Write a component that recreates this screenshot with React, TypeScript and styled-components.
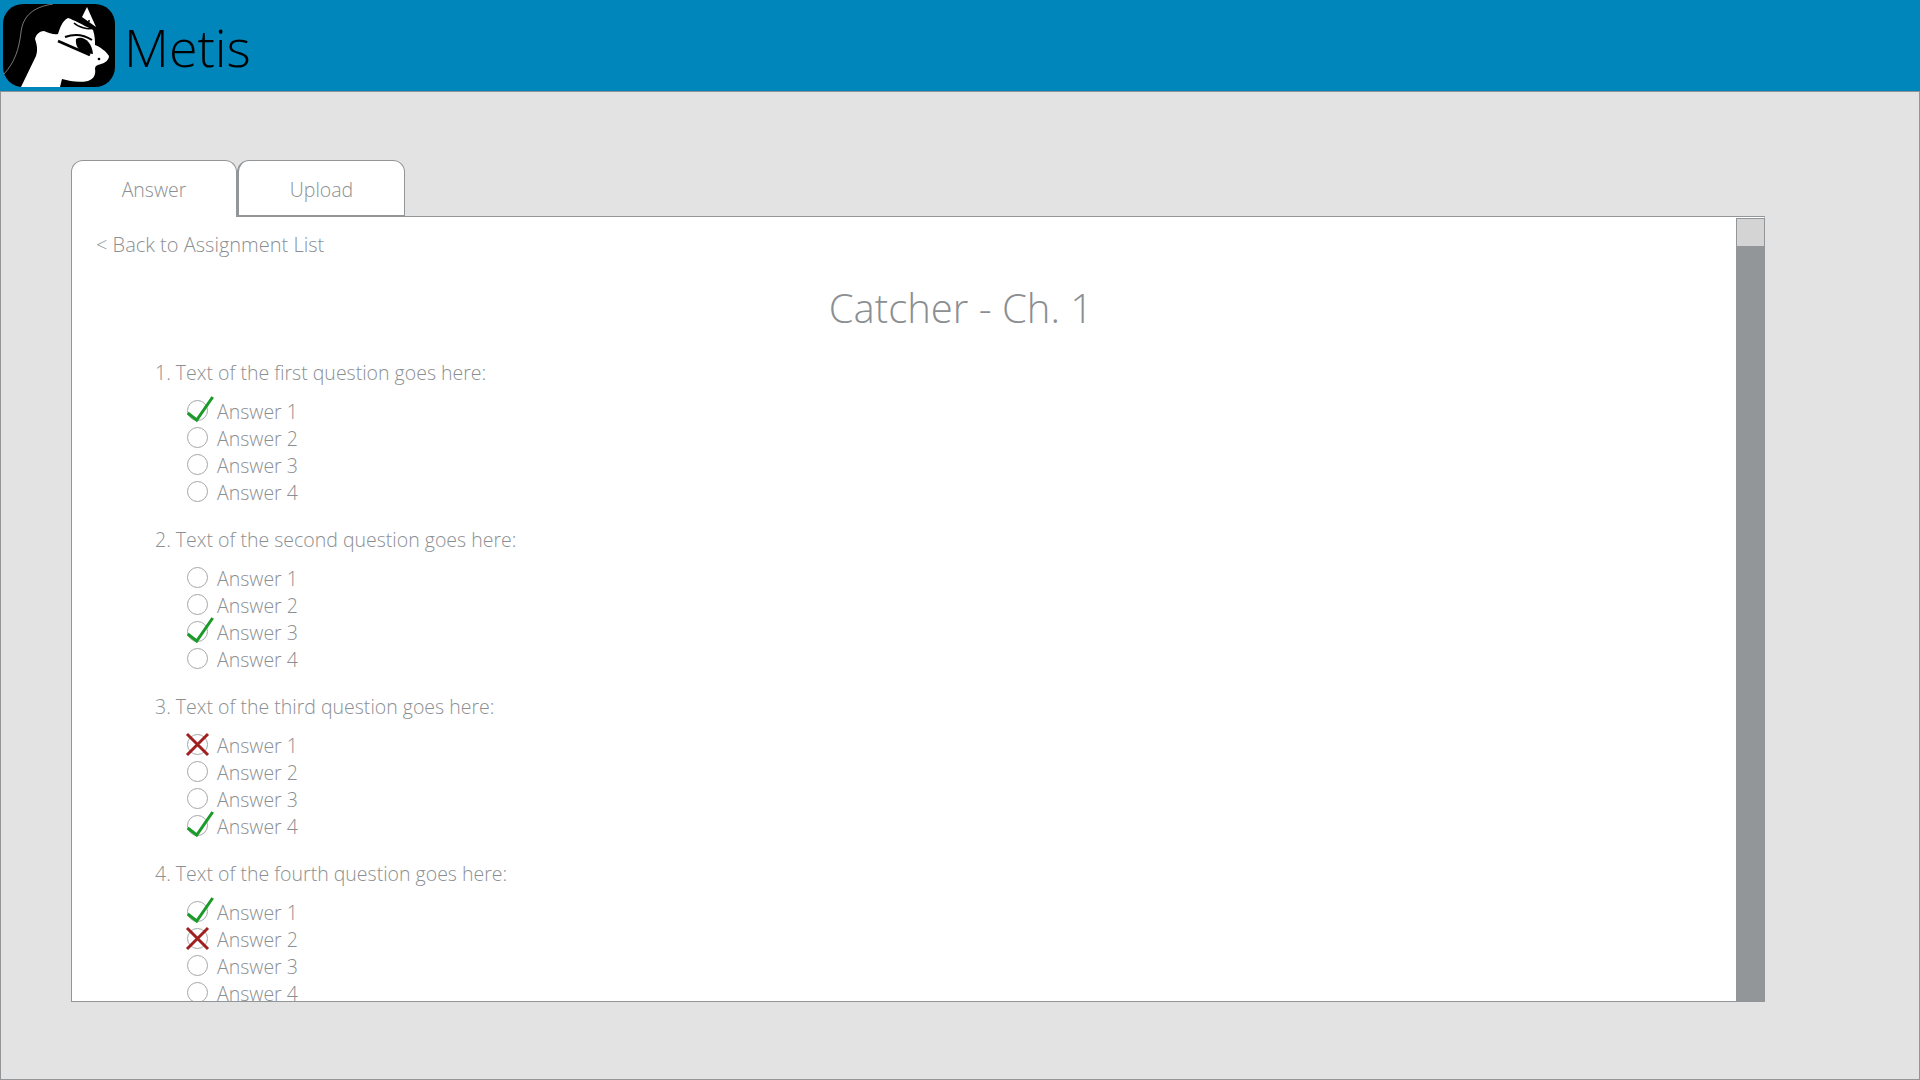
import React from "react";
import styled, { createGlobalStyle } from "styled-components";

const GlobalStyle = createGlobalStyle`
  html, body {
    margin: 0;
    padding: 0;
    width: 1920px;
    height: 1080px;
    overflow: hidden;
    font-family: "Open Sans", "Noto Sans", sans-serif;
    font-weight: 300;
  }
  * {
    box-sizing: border-box;
  }
`;

const questions = [
  { text: "1. Text of the first question goes here:", marks: ["check", "", "", ""] },
  { text: "2. Text of the second question goes here:", marks: ["", "", "check", ""] },
  { text: "3. Text of the third question goes here:", marks: ["cross", "", "", "check"] },
  { text: "4. Text of the fourth question goes here:", marks: ["check", "cross", "", ""] },
];

const Logo = () => (
  <LogoSvg viewBox="0 0 112 83">
    <rect x="0" y="0" width="112" height="83" rx="20" fill="#000" />
    <path d="M50 0C30 3 20 12 18 28C16 45 12 58 1 70" fill="none" stroke="#aaa" strokeWidth="0.7" />
    <path
      d="M18 83L33 52C35 46 34 41 32 35C33 30 37 27 41 27C46 29 51 31 55 30C57 24 59 17 65 14C71 16 78 20 90 26C92 32 92 37 92 41C97 43 103 47 106 52C106 56 102 59 98 60C94 61 92 62 92 65C93 70 91 75 85 77C75 79 67 77 59 75L57 83Z"
      fill="#fff"
    />
    <path d="M84 3L93 23L79 13Z" fill="#fff" />
    <path d="M71 19C75 23 85 26 90 24" fill="none" stroke="#000" strokeWidth="1.6" />
    <path d="M62 33C70 30 80 30 89 36" fill="none" stroke="#000" strokeWidth="2" />
    <path d="M55 37L87 51" fill="none" stroke="#000" strokeWidth="2.6" />
    <path d="M73 35C80 31 89 38 90 50L82 49C76 47 72 42 73 35Z" fill="#000" />
    <circle cx="96" cy="55" r="1.3" fill="#000" />
    <circle cx="86" cy="17" r="1" fill="#000" />
    <circle cx="86" cy="21" r="1" fill="#000" />
  </LogoSvg>
);

const Check = () => (
  <MarkSvg viewBox="0 0 30 30">
    <path d="M1.7 18L10.7 25L26.7 2" fill="none" stroke="#1a9a28" strokeWidth="3" />
  </MarkSvg>
);

const Cross = () => (
  <MarkSvg viewBox="0 0 30 30">
    <path d="M1 5L22 26M22 5L1 26" fill="none" stroke="#a01f1f" strokeWidth="3" />
  </MarkSvg>
);

const App = () => {
  return (
    <Page>
      <GlobalStyle />
      <Header>
        <Logo />
        <Brand>Metis</Brand>
      </Header>
      <Main>
        <Tabs>
          <Tab $active>Answer</Tab>
          <Tab>Upload</Tab>
        </Tabs>
        <Panel>
          <Content>
            <BackLink>&lt; Back to Assignment List</BackLink>
            <Title>Catcher - Ch. 1</Title>
            {questions.map((q) => (
              <Question key={q.text}>
                <QuestionText>{q.text}</QuestionText>
                {q.marks.map((m, i) => (
                  <AnswerRow key={i}>
                    <Radio>
                      {m === "check" && <Check />}
                      {m === "cross" && <Cross />}
                    </Radio>
                    <span>Answer {i + 1}</span>
                  </AnswerRow>
                ))}
              </Question>
            ))}
          </Content>
          <ScrollTrack>
            <ScrollThumb />
          </ScrollTrack>
        </Panel>
      </Main>
    </Page>
  );
};
export default App;

const Page = styled.div`
  width: 1920px;
  height: 1080px;
  display: flex;
  flex-direction: column;
  background-color: #e3e3e3;
`;

const Header = styled.header`
  height: 92px;
  flex-shrink: 0;
  display: flex;
  align-items: center;
  padding: 3px 0 4px 3px;
  background-color: #0086ba;
  border-bottom: 1px solid #8d9396;
`;

const LogoSvg = styled.svg`
  width: 112px;
  height: 83px;
  flex-shrink: 0;
`;

const Brand = styled.div`
  margin: 2px 0 0 9px;
  font-size: 52px;
  line-height: 83px;
  color: #000;
`;

const Main = styled.main`
  flex: 1;
  padding: 68px 0 0 70px;
  border: solid #939699;
  border-width: 0 1px 1px 1px;
`;

const Tabs = styled.div`
  display: flex;
  height: 57px;
  position: relative;
  z-index: 1;
`;

const Tab = styled.div<{ $active?: boolean }>`
  width: ${(p) => (p.$active ? "166px" : "168px")};
  height: 57px;
  padding-top: 11px;
  text-align: center;
  font-size: 19.5px;
  line-height: 36px;
  color: #8b8f92;
  background-color: #fff;
  border-radius: 12px 12px 0 0;
  border: solid #939699;
  border-width: ${(p) => (p.$active ? "1px 1px 0 1px" : "1px 1px 2px 2px")};
`;

const Panel = styled.section`
  width: 1694px;
  height: 786px;
  margin-top: -1px;
  display: flex;
  background-color: #fff;
  border: 1px solid #939699;
  border-right: none;
`;

const Content = styled.div`
  flex: 1;
  overflow: hidden;
  padding: 14px 0 0 24px;
`;

const BackLink = styled.div`
  font-size: 20px;
  line-height: 28px;
  color: #8b8f92;
`;

const Title = styled.h1`
  margin: 21px 0 0 0;
  padding-left: 90px;
  font-size: 40px;
  font-weight: 300;
  line-height: 56px;
  text-align: center;
  color: #8b8f92;
`;

const Question = styled.div`
  margin: 0 0 0 59px;
  padding-top: 23px;
  height: 167px;
`;

const QuestionText = styled.div`
  font-size: 19.5px;
  line-height: 28px;
  margin-bottom: 11px;
  color: #8b8f92;
`;

const AnswerRow = styled.div`
  display: flex;
  align-items: center;
  height: 27px;
  padding-left: 32px;
  font-size: 19.5px;
  color: #8b8f92;
`;

const Radio = styled.div`
  position: relative;
  width: 21px;
  height: 21px;
  margin-right: 9px;
  margin-top: -2px;
  border: 1px solid #a3a6a8;
  border-radius: 50%;
  flex-shrink: 0;
`;

const MarkSvg = styled.svg`
  position: absolute;
  left: -2px;
  top: -6px;
  width: 30px;
  height: 30px;
  overflow: visible;
`;

const ScrollTrack = styled.div`
  width: 29px;
  flex-shrink: 0;
  background-color: #939699;
  padding-top: 1px;
  border-top: 1px solid #fff;
  border-right: 1px solid #939699;
`;

const ScrollThumb = styled.div`
  height: 27px;
  background-color: #d4d4d4;
  border-left: 1px solid #939699;
`;
